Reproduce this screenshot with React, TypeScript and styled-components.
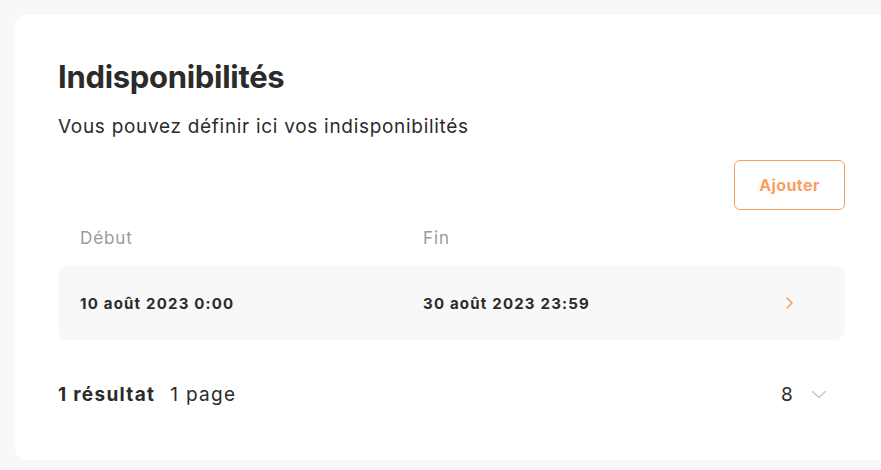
import styled, { createGlobalStyle } from "styled-components"

const GlobalStyle = createGlobalStyle`
  html, body {
    margin: 0;
    padding: 0;
    background: #f8f8f8;
    overflow: hidden;
  }
  body {
    font-family: Inter, "Noto Sans", sans-serif;
    color: #2b2b2b;
  }
`

const ORANGE = "#f7a062"

// ─── Carte ────────────────────────────────────────────────────────────────────

const Card = styled.section`
  margin: 15px 0 0 15px;
  width: 880px;
  box-sizing: border-box;
  height: 445px;
  background: #ffffff;
  border-radius: 10px;
  padding: 43px 50px 0 43px;
  display: flex;
  flex-direction: column;
`

const Title = styled.h1`
  margin: 0;
  font-size: 31px;
  line-height: 38px;
  font-weight: 700;
  letter-spacing: -0.3px;
  color: #2b2b2b;
`

const Subtitle = styled.p`
  margin: 19px 0 0;
  font-size: 19px;
  line-height: 24px;
  letter-spacing: 0.7px;
  color: #2b2b2b;
`

const Toolbar = styled.div`
  display: flex;
  justify-content: flex-end;
  margin-top: 21px;
`

const OutlineButton = styled.button`
  width: 111px;
  height: 50px;
  border: 1px solid ${ORANGE};
  border-radius: 6px;
  background: #fff;
  color: ${ORANGE};
  font-family: inherit;
  font-size: 16px;
  font-weight: 700;
  letter-spacing: 0.4px;
  cursor: pointer;
`

// ─── Tableau ──────────────────────────────────────────────────────────────────

const Columns = styled.div`
  display: grid;
  grid-template-columns: 343px 1fr 60px;
  padding: 0 0 0 22px;
`

const HeadRow = styled(Columns)`
  margin-top: 16px;
  height: 24px;
  align-items: center;
  font-size: 17px;
  letter-spacing: 0.9px;
  color: #9a9a9a;
`

const DataRow = styled(Columns)`
  margin-top: 16px;
  height: 74px;
  align-items: center;
  background: #f8f8f8;
  border-radius: 10px;
  font-size: 15px;
  font-weight: 700;
  letter-spacing: 1.2px;
  color: #2b2b2b;
`

const Chevron = styled.span`
  display: flex;
  align-items: center;
  color: ${ORANGE};
`

// ─── Pied ─────────────────────────────────────────────────────────────────────

const Footer = styled.div`
  margin-top: 43px;
  display: flex;
  align-items: center;
  justify-content: space-between;
  font-size: 19px;
  letter-spacing: 1.3px;
`

const Count = styled.div`
  display: flex;
  gap: 15px;
`

const Strong = styled.strong`
  font-weight: 700;
`

const PageSize = styled.div`
  display: flex;
  align-items: center;
  gap: 17px;
  margin-right: 18px;
  color: #2b2b2b;
`

export default function App() {
  return (
    <>
      <GlobalStyle />
      <Card>
        <Title>Indisponibilités</Title>
        <Subtitle>Vous pouvez définir ici vos indisponibilités</Subtitle>
        <Toolbar>
          <OutlineButton>Ajouter</OutlineButton>
        </Toolbar>
        <HeadRow>
          <span>Début</span>
          <span>Fin</span>
        </HeadRow>
        <DataRow>
          <span>10 août 2023 0:00</span>
          <span>30 août 2023 23:59</span>
          <Chevron>
            <svg width="9" height="14" viewBox="0 0 9 14" fill="none">
              <path d="M2 2l5 5-5 5" stroke={ORANGE} strokeWidth="1.6" strokeLinecap="round" strokeLinejoin="round" />
            </svg>
          </Chevron>
        </DataRow>
        <Footer>
          <Count>
            <Strong>1 résultat</Strong>
            <span>1 page</span>
          </Count>
          <PageSize>
            <span>8</span>
            <svg width="16" height="9" viewBox="0 0 16 9" fill="none">
              <path d="M1.5 1.5l6.5 6 6.5-6" stroke="#c4c4c4" strokeWidth="1.3" strokeLinecap="round" strokeLinejoin="round" />
            </svg>
          </PageSize>
        </Footer>
      </Card>
    </>
  )
}
